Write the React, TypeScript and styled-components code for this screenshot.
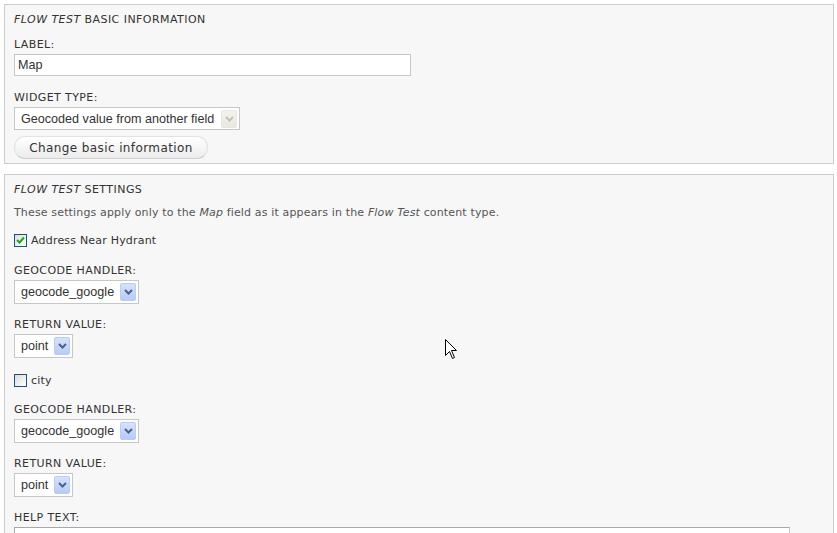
import { createGlobalStyle, styled } from 'styled-components';

const GlobalStyle = createGlobalStyle`
  html, body {
    margin: 0;
    padding: 0;
    height: 100%;
    overflow: hidden;
    background: #ffffff;
  }
  body {
    font-family: "DejaVu Sans", Verdana, sans-serif;
    color: #494949;
  }
`;

type SelectProps = { value: string; width: number; height?: number; disabled?: boolean };
type CheckProps = { label: string; checked?: boolean; after?: number };

function Select({ value, width, height = 24, disabled }: SelectProps) {
  return (
    <SelectBox $width={width} $height={height}>
      <SelectValue>{value}</SelectValue>
      <ArrowButton $disabled={disabled}>
        <svg width="9" height="6" viewBox="0 0 9 6">
          <path d="M1 1 L4.5 4.5 L8 1" fill="none" stroke={disabled ? '#c4c2b8' : '#4d6185'} strokeWidth="2" />
        </svg>
      </ArrowButton>
    </SelectBox>
  );
}

function Checkbox({ label, checked, after = 14 }: CheckProps) {
  return (
    <CheckRow $after={after}>
      <CheckBox>
        {checked && (
          <svg width="9" height="9" viewBox="0 0 9 9">
            <path d="M1 4 L3.5 6.5 L8 1.5" fill="none" stroke="#21a121" strokeWidth="2" />
          </svg>
        )}
      </CheckBox>
      <span>{label}</span>
    </CheckRow>
  );
}

function Pointer() {
  return (
    <Cursor width="13" height="22" viewBox="0 0 13 22">
      <path
        d="M0.5 0.5 L0.5 16.5 L4.5 12.5 L7.5 19.5 L9.5 18.5 L6.5 11.5 L11.5 11.5 Z"
        fill="#ffffff"
        stroke="#000000"
        strokeWidth="1"
      />
    </Cursor>
  );
}

export default function App() {
  return (
    <Page>
      <GlobalStyle />
      <Panel>
        <Legend>
          <em>Flow Test</em> basic information
        </Legend>
        <FormItem $after={13}>
          <Label>Label:</Label>
          <TextInput defaultValue="Map" />
        </FormItem>
        <FormItem $after={6}>
          <Label>Widget type:</Label>
          <Select value="Geocoded value from another field" width={226} height={23} disabled />
        </FormItem>
        <Button>Change basic information</Button>
      </Panel>

      <Panel>
        <Legend>
          <em>Flow Test</em> settings
        </Legend>
        <Description>
          These settings apply only to the <em>Map</em> field as it appears in the <em>Flow Test</em> content type.
        </Description>
        <Checkbox label="Address Near Hydrant" checked />
        <FormItem>
          <Label>Geocode handler:</Label>
          <Select value="geocode_google" width={125} />
        </FormItem>
        <FormItem $after={14}>
          <Label>Return value:</Label>
          <Select value="point" width={59} />
        </FormItem>
        <Checkbox label="city" after={13} />
        <FormItem>
          <Label>Geocode handler:</Label>
          <Select value="geocode_google" width={125} />
        </FormItem>
        <FormItem>
          <Label>Return value:</Label>
          <Select value="point" width={59} />
        </FormItem>
        <FormItem>
          <Label>Help text:</Label>
          <TextArea />
        </FormItem>
      </Panel>
      <Pointer />
    </Page>
  );
}

const Page = styled.div`
  position: relative;
  padding: 4px 4px 0 4px;
  width: 830px;
`;

const Panel = styled.section`
  background: #f7f7f7;
  border: 1px solid #cccccc;
  padding: 6px 9px 4px 9px;
  margin-bottom: 10px;
`;

const Legend = styled.div`
  font-size: 11px;
  line-height: 16px;
  letter-spacing: 0.45px;
  text-transform: uppercase;
  color: #333333;
  padding-top: 1px;
  margin-bottom: 8px;

  em {
    font-style: italic;
  }
`;

const Description = styled.div`
  font-size: 11px;
  line-height: 12px;
  letter-spacing: 0.15px;
  color: #555555;
  padding-top: 1px;
  margin-bottom: 13px;
`;

const FormItem = styled.div<{ $after?: number }>`
  margin-bottom: ${(p) => p.$after ?? 12}px;
`;

const Label = styled.div`
  font-size: 11px;
  line-height: 16px;
  letter-spacing: 0.4px;
  text-transform: uppercase;
  color: #333333;
  padding-top: 1px;
  margin-bottom: 1px;
`;

const TextInput = styled.input`
  display: block;
  box-sizing: border-box;
  width: 397px;
  height: 22px;
  margin: 0;
  padding: 0 3px;
  border: 1px solid #c7c7c7;
  background: #ffffff;
  font-family: "Liberation Sans", Arial, sans-serif;
  font-size: 12.6px;
  color: #333333;
  outline: none;
`;

const SelectBox = styled.div<{ $width: number; $height: number }>`
  box-sizing: border-box;
  width: ${(p) => p.$width}px;
  height: ${(p) => p.$height}px;
  display: flex;
  align-items: center;
  justify-content: space-between;
  padding: 0 2px 0 6px;
  border: 1px solid #c7c7c7;
  background: #ffffff;
  font-family: "Liberation Sans", Arial, sans-serif;
  font-size: 12.6px;
  color: #333333;
`;

const SelectValue = styled.span`
  white-space: nowrap;
`;

const ArrowButton = styled.span<{ $disabled?: boolean }>`
  box-sizing: border-box;
  width: 16px;
  height: 18px;
  display: flex;
  align-items: center;
  justify-content: center;
  border: 1px solid ${(p) => (p.$disabled ? '#e6e5de' : '#b9cbf7')};
  border-radius: 2px;
  background: ${(p) =>
    p.$disabled ? 'linear-gradient(#f4f3ee, #e8e7e0)' : 'linear-gradient(#d6e2fd, #b6cbf9)'};
`;

const Button = styled.button`
  display: block;
  box-sizing: border-box;
  width: 194px;
  height: 23px;
  margin: 0;
  padding: 0;
  border: 1px solid #e2e2e2;
  border-bottom-color: #cfcfcf;
  border-radius: 11px;
  background: linear-gradient(#ffffff, #ececec);
  font-family: "DejaVu Sans", Verdana, sans-serif;
  font-size: 12px;
  letter-spacing: 0.4px;
  color: #333333;
`;

const CheckRow = styled.label<{ $after: number }>`
  display: flex;
  align-items: center;
  gap: 4px;
  height: 16px;
  font-size: 11px;
  letter-spacing: 0.2px;
  color: #333333;
  margin-bottom: ${(p) => p.$after}px;
`;

const CheckBox = styled.span`
  box-sizing: border-box;
  width: 13px;
  height: 13px;
  display: flex;
  align-items: center;
  justify-content: center;
  border: 1px solid #1c5180;
  background: linear-gradient(135deg, #dcdcd7, #ffffff);
`;

const TextArea = styled.textarea`
  display: block;
  box-sizing: border-box;
  width: 776px;
  height: 90px;
  margin: 0;
  border: 1px solid #a8a8a8;
  border-right-color: #c7c7c7;
  background: #ffffff;
  resize: none;
`;

const Cursor = styled.svg`
  position: absolute;
  left: 445px;
  top: 339px;
`;
